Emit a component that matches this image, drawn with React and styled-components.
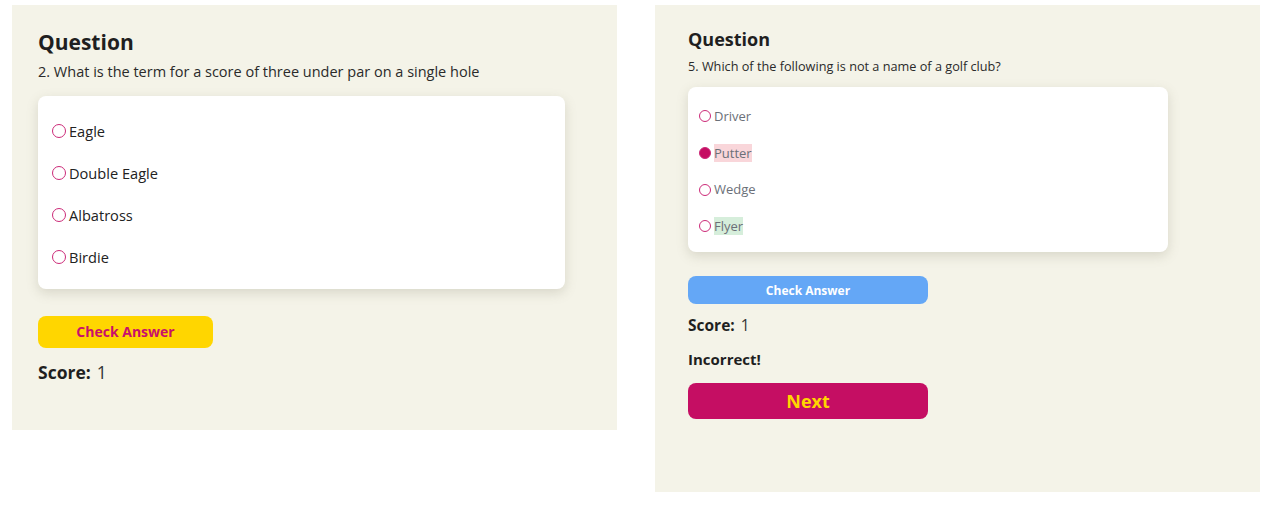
import React from "react";
import styled, { createGlobalStyle } from "styled-components";

const GlobalStyle = createGlobalStyle`
  body {
    margin: 0;
    background: #ffffff;
    font-family: "Open Sans", "Noto Sans", sans-serif;
    color: #222222;
  }
`;

const Page = styled.div`
  display: flex;
  align-items: flex-start;
  gap: 38px;
  padding: 5px 0 0 12px;
`;

const Panel = styled.div`
  box-sizing: border-box;
  width: 605px;
  height: ${(p) => p.$height}px;
  background: #f4f3e8;
  padding: ${(p) => p.$padTop}px 0 0 ${(p) => p.$padLeft}px;
`;

const Heading = styled.h2`
  margin: 0;
  font-size: ${(p) => p.$size}px;
  line-height: 1.2;
  font-weight: 700;
  color: #1f1f1f;
`;

const QuestionText = styled.p`
  margin: ${(p) => p.$gap}px 0 0;
  font-size: ${(p) => p.$size}px;
  line-height: 1.3;
  color: #2a2a2a;
`;

const Card = styled.div`
  box-sizing: border-box;
  width: ${(p) => p.$width}px;
  margin-top: ${(p) => p.$gap}px;
  padding: ${(p) => p.$padTop}px ${(p) => p.$padX}px ${(p) => p.$padBottom}px;
  background: #ffffff;
  border-radius: 8px;
  box-shadow: 0 4px 12px rgba(120, 115, 90, 0.22);
  display: flex;
  flex-direction: column;
  gap: ${(p) => p.$rowGap}px;
`;

const Option = styled.label`
  display: flex;
  align-items: center;
  gap: 3px;
  font-size: ${(p) => p.$size}px;
  line-height: 1.4;
  color: ${(p) => (p.$muted ? "#6b7078" : "#222222")};
`;

const Radio = styled.span`
  box-sizing: border-box;
  width: ${(p) => p.$dot}px;
  height: ${(p) => p.$dot}px;
  border-radius: 50%;
  border: 1px solid #cc2a78;
  background: ${(p) => (p.$checked ? "#c50e63" : "transparent")};
  flex-shrink: 0;
`;

const OptionLabel = styled.span`
  background: ${(p) => p.$tint || "transparent"};
`;

const Button = styled.button`
  display: block;
  box-sizing: border-box;
  width: ${(p) => p.$width}px;
  height: ${(p) => p.$height}px;
  margin-top: ${(p) => p.$gap}px;
  border: none;
  border-radius: 8px;
  background: ${(p) => p.$bg};
  color: ${(p) => p.$fg};
  font-family: inherit;
  font-size: ${(p) => p.$size}px;
  font-weight: 700;
  cursor: pointer;
`;

const Line = styled.div`
  margin-top: ${(p) => p.$gap}px;
  font-size: ${(p) => p.$size}px;
  line-height: 1.3;
  color: #1f1f1f;
  font-weight: ${(p) => (p.$bold ? 700 : 400)};
`;

const Strong = styled.strong`
  font-weight: 700;
  margin-right: 6px;
`;

const Value = styled.span`
  color: #333333;
`;

const leftOptions = ["Eagle", "Double Eagle", "Albatross", "Birdie"];
const rightOptions = [
  { text: "Driver" },
  { text: "Putter", checked: true, tint: "#f9d6da" },
  { text: "Wedge" },
  { text: "Flyer", tint: "#d6eedb" },
];

export default function App() {
  return (
    <>
      <GlobalStyle />
      <Page>
        <Panel $height={425} $padTop={25} $padLeft={26}>
          <Heading $size={21}>Question</Heading>
          <QuestionText $gap={8} $size={14.5}>
            2. What is the term for a score of three under par on a single hole
          </QuestionText>
          <Card $width={527} $gap={14} $padTop={25} $padBottom={21} $padX={14} $rowGap={21.6}>
            {leftOptions.map((o) => (
              <Option key={o} $size={14.6}>
                <Radio $dot={14} />
                {o}
              </Option>
            ))}
          </Card>
          <Button $width={175} $height={32} $gap={27} $bg="#ffd600" $fg="#c8106a" $size={14}>
            Check Answer
          </Button>
          <Line $gap={13} $size={17.5}>
            <Strong>Score:</Strong>
            <Value>1</Value>
          </Line>
        </Panel>

        <Panel $height={487} $padTop={24} $padLeft={33}>
          <Heading $size={18}>Question</Heading>
          <QuestionText $gap={7} $size={12.7}>
            5. Which of the following is not a name of a golf club?
          </QuestionText>
          <Card $width={480} $gap={13} $padTop={20} $padBottom={17} $padX={11} $rowGap={18.5}>
            {rightOptions.map((o) => (
              <Option key={o.text} $size={13} $muted>
                <Radio $dot={12} $checked={o.checked} />
                <OptionLabel $tint={o.tint}>{o.text}</OptionLabel>
              </Option>
            ))}
          </Card>
          <Button $width={240} $height={28} $gap={24} $bg="#64a7f6" $fg="#ffffff" $size={12}>
            Check Answer
          </Button>
          <Line $gap={11} $size={15.5}>
            <Strong>Score:</Strong>
            <Value>1</Value>
          </Line>
          <Line $gap={15} $size={15} $bold>
            Incorrect!
          </Line>
          <Button $width={240} $height={36} $gap={13} $bg="#c50e63" $fg="#ffd600" $size={18}>
            Next
          </Button>
        </Panel>
      </Page>
    </>
  );
}
